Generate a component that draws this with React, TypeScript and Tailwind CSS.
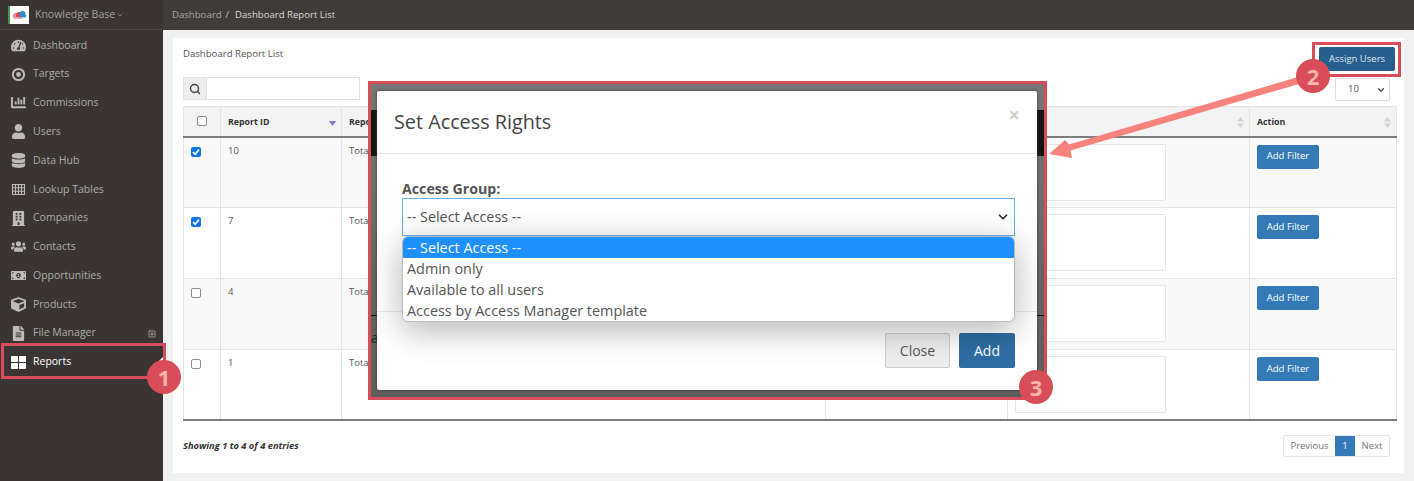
import { ChevronDown, Search } from 'lucide-react';
import {
  FaTachometerAlt,
  FaChartBar,
  FaUser,
  FaDatabase,
  FaBuilding,
  FaUsers,
  FaMoneyBillAlt,
  FaCube,
  FaFileAlt,
  FaThLarge,
} from 'react-icons/fa';
import { FiPlusSquare } from 'react-icons/fi';

function TargetIcon({ size, className }: { size?: number; className?: string }) {
  return (
    <svg width={size} height={size} viewBox="0 0 15 15" className={className}>
      <circle cx="7.5" cy="7.5" r="5.6" fill="none" stroke="currentColor" strokeWidth="2" />
      <circle cx="7.5" cy="7.5" r="2.4" fill="currentColor" />
    </svg>
  );
}

function GridIcon({ size, className }: { size?: number; className?: string }) {
  return (
    <svg width={size} height={size} viewBox="0 0 15 15" className={className}>
      <path
        d="M1.5 2.5 H13.5 V12.5 H1.5 Z M1.5 5.8 H13.5 M1.5 9.2 H13.5 M4.5 2.5 V12.5 M7.5 2.5 V12.5 M10.5 2.5 V12.5"
        fill="none"
        stroke="currentColor"
        strokeWidth="1.1"
      />
    </svg>
  );
}

const menu = [
  { label: 'Dashboard', icon: FaTachometerAlt },
  { label: 'Targets', icon: TargetIcon },
  { label: 'Commissions', icon: FaChartBar },
  { label: 'Users', icon: FaUser },
  { label: 'Data Hub', icon: FaDatabase },
  { label: 'Lookup Tables', icon: GridIcon },
  { label: 'Companies', icon: FaBuilding },
  { label: 'Contacts', icon: FaUsers },
  { label: 'Opportunities', icon: FaMoneyBillAlt },
  { label: 'Products', icon: FaCube },
  { label: 'File Manager', icon: FaFileAlt },
];

const rows = [
  { id: 10, checked: true },
  { id: 7, checked: true },
  { id: 4, checked: false },
  { id: 1, checked: false },
];

function SortIcon({ className }: { className?: string }) {
  return (
    <svg width="7" height="11" viewBox="0 0 7 11" className={className}>
      <path d="M3.5 0 L7 4.5 H0 Z" fill="#d4d4d4" />
      <path d="M3.5 11 L7 6.5 H0 Z" fill="#d4d4d4" />
    </svg>
  );
}

function Checkbox({ checked }: { checked: boolean }) {
  if (checked) {
    return (
      <span className="flex h-[10px] w-[10px] items-center justify-center rounded-[2px] bg-[#0f75f0]">
        <svg width="8" height="8" viewBox="0 0 8 8">
          <path d="M1 4.2 L3.2 6.3 L7 1.6" fill="none" stroke="#fff" strokeWidth="1.6" />
        </svg>
      </span>
    );
  }
  return <span className="block h-[10px] w-[10px] rounded-[2px] border border-[#8c8c8c] bg-white" />;
}

function Badge({ n, className }: { n: number; className: string }) {
  return (
    <div
      className={`absolute flex h-[34px] w-[34px] items-center justify-center rounded-full bg-[#d94c59] text-[22px] font-bold text-[#f9b4ac] ${className}`}
    >
      {n}
    </div>
  );
}

export default function App() {
  return (
    <div className="relative flex h-[481px] w-[1414px] overflow-hidden bg-[#f1f1f1] font-['Open_Sans',sans-serif] text-[#555]">
      {/* Sidebar */}
      <aside className="flex w-[163px] shrink-0 flex-col bg-[#3a3532] text-[10.5px] text-[#aeaba8]">
        <div className="flex h-[30px] items-center border-b border-[#4a4643] pl-[8px]">
          <div className="flex h-[18px] w-[21px] items-center justify-center border-l-[2px] border-[#3d9a3d] bg-white">
            <svg width="15" height="10" viewBox="0 0 15 10">
              <circle cx="4" cy="6" r="3" fill="#f08a90" />
              <circle cx="7" cy="5" r="3" fill="#e0455a" />
              <circle cx="10.5" cy="4" r="3" fill="#2a8fd0" />
              <rect x="2" y="7" width="8" height="2" fill="#f4a6aa" />
              <rect x="8" y="5" width="6" height="2.4" fill="#2a8fd0" />
            </svg>
          </div>
          <span className="ml-[6px] text-[10.5px] text-[#a3a09d]">Knowledge Base</span>
          <ChevronDown size={8} className="ml-[1px]" />
        </div>
        <nav className="flex flex-col pt-[1px]">
          {menu.map((item) => (
            <div key={item.label} className="relative flex h-[28.8px] items-center pl-[11px]">
              <item.icon size={15} className="w-[15px] text-[#bdbab7]" />
              <span className="ml-[7px]">{item.label}</span>
              {item.label === 'File Manager' && (
                <FiPlusSquare size={8} className="absolute right-[7px] top-[11px] text-[#c8c6c4]" />
              )}
            </div>
          ))}
          <div className="relative flex h-[28.8px] items-center pl-[11px] text-white">
            <FaThLarge size={15} className="w-[15px]" />
            <span className="ml-[7px]">Reports</span>
            <span className="absolute right-0 top-[9px] h-0 w-0 border-y-[5px] border-r-[5px] border-y-transparent border-r-white" />
          </div>
        </nav>
      </aside>

      {/* Main */}
      <div className="flex min-w-0 flex-1 flex-col">
        <header className="flex h-[30px] items-center bg-[#403c39] pl-[9px] text-[9.6px]">
          <span className="text-[#a9a6a3]">Dashboard</span>
          <span className="ml-[4px] text-[#c4c1be]">/</span>
          <span className="ml-[6px] text-[#d8d8d8]">Dashboard Report List</span>
        </header>

        <main className="px-[10px] pt-[8px]">
          <section className="h-[435px] w-[1231px] bg-white pl-[10px] pt-[9px]">
            <div className="flex h-[30px] items-start justify-between pr-[9px]">
              <h2 className="text-[9.6px] text-[#555]">Dashboard Report List</h2>
              <button className="h-[24px] w-[76px] rounded-[2px] bg-[#285e8e] text-[9.5px] text-[#dfe8ef]">
                Assign Users
              </button>
            </div>

            <div className="flex h-[29px] justify-between pr-[14px]">
              <div className="flex h-[23px] w-[177px] border border-[#e2e2e2]">
                <span className="flex w-[23px] items-center justify-center border-r border-[#e2e2e2] bg-[#eee]">
                  <Search size={12} strokeWidth={3} className="text-[#444]" />
                </span>
              </div>
              <div className="mt-[1px] flex h-[23px] w-[55px] items-center justify-between rounded-[1px] border border-[#ddd] pl-[12px] pr-[3px] text-[9.5px]">
                10
                <ChevronDown size={10} strokeWidth={3} className="text-[#444]" />
              </div>
            </div>

            <table className="w-[1213px] table-fixed border-collapse border-b-2 border-[#7d7d7d] text-[9.5px]">
              <colgroup>
                <col className="w-[37px]" />
                <col className="w-[121px]" />
                <col className="w-[484px]" />
                <col className="w-[182px]" />
                <col className="w-[242px]" />
                <col className="w-[147px]" />
              </colgroup>
              <thead>
                <tr className="h-[30px] border-b-2 border-[#7d7d7d] bg-[#f3f3f3] text-left text-[8.8px] text-[#333]">
                  <th className="border border-b-0 border-[#e4e4e4]">
                    <span className="ml-[13px] block h-[10px] w-[10px] rounded-[2px] border border-[#8c8c8c] bg-white" />
                  </th>
                  <th className="relative border border-b-0 border-[#e4e4e4] pl-[7px] pt-[2px] font-bold">
                    Report ID
                    <svg width="7" height="5" viewBox="0 0 7 5" className="absolute right-[5px] top-[14px]">
                      <path d="M0 0 H7 L3.5 5 Z" fill="#7b7bd6" />
                    </svg>
                  </th>
                  <th className="border border-b-0 border-[#e4e4e4] pl-[7px] pt-[2px] font-bold">Report</th>
                  <th className="border border-b-0 border-[#e4e4e4]" />
                  <th className="relative border border-b-0 border-[#e4e4e4]">
                    <SortIcon className="absolute right-[5px] top-[10px]" />
                  </th>
                  <th className="relative border border-b-0 border-[#e4e4e4] pl-[7px] pt-[2px] font-bold">
                    Action
                    <SortIcon className="absolute right-[5px] top-[10px]" />
                  </th>
                </tr>
              </thead>
              <tbody>
                {rows.map((row, i) => (
                  <tr
                    key={row.id}
                    className={`h-[70.9px] border-b border-[#e4e4e4] align-top ${i % 2 === 0 ? 'bg-[#f9f9f9]' : 'bg-white'}`}
                  >
                    <td className="border-x border-[#e4e4e4] pl-[7px] pt-[9px]">
                      <Checkbox checked={row.checked} />
                    </td>
                    <td className="border-x border-[#e4e4e4] pl-[7px] pt-[6px]">{row.id}</td>
                    <td className="border-x border-[#e4e4e4] pl-[7px] pt-[6px]">Total</td>
                    <td className="border-x border-[#e4e4e4]" />
                    <td className="border-x border-[#e4e4e4] pl-[7px] pt-[6px]">
                      <div className="h-[57px] w-[151px] rounded-[1px] border border-[#e6e6e6] bg-white" />
                    </td>
                    <td className="border-x border-[#e4e4e4] pl-[7px] pt-[7px]">
                      <button className="h-[24px] w-[62px] rounded-[2px] bg-[#337ab7] text-[9.5px] text-white">
                        Add Filter
                      </button>
                    </td>
                  </tr>
                ))}
              </tbody>
            </table>

            <div className="flex items-center justify-between pr-[14px] pt-[14px]">
              <span className="-mt-[1px] text-[9.3px] font-bold italic text-[#333]">Showing 1 to 4 of 4 entries</span>
              <div className="flex h-[22px] items-stretch rounded-[2px] border border-[#e6e6e6] text-[9.5px]">
                <span className="flex w-[51px] items-center justify-center text-[#777]">Previous</span>
                <span className="flex w-[20px] items-center justify-center bg-[#337ab7] text-white">1</span>
                <span className="flex w-[34px] items-center justify-center text-[#777]">Next</span>
              </div>
            </div>
          </section>
        </main>
      </div>

      {/* Callout 1 */}
      <div className="absolute left-[1px] top-[343px] h-[36px] w-[165px] border-[3px] border-[#d94c59]" />
      <Badge n={1} className="left-[147px] top-[360px]" />

      {/* Callout 2 */}
      <div className="absolute left-[1312px] top-[42px] h-[35px] w-[89px] border-[3px] border-[#d94c59]" />

      {/* Modal callout 3 */}
      <div className="absolute left-[368px] top-[81px] h-[319px] w-[679px] border-[3px] border-[#d94c59] bg-gradient-to-b from-[#777] to-[#5e5e5e] pl-[6px] pt-[7px]">
        <div className="absolute inset-x-0 top-[26px] h-[46px] bg-[#141414]" />
        <div className="absolute inset-x-0 top-[231px] h-[1px] bg-[#111]" />
        <span className="absolute left-[0px] top-[245px] text-[14px] leading-[18px] text-[#222]">a</span>
        <div className="relative h-[299px] w-[660px] rounded-[2px] bg-white shadow-[0_0_3px_#333]">
          <div className="relative flex h-[63px] items-center border-b border-[#e8e8e8] pl-[17px]">
            <h3 className="-mt-[1px] text-[19.8px] text-[#444]">Set Access Rights</h3>
            <span className="absolute right-[17px] top-[12px] text-[20px] font-bold leading-[24px] text-[#cfcfcf]">×</span>
          </div>
          <div className="h-[157px] pl-[25px] pt-[25px]">
            <label className="block text-[14.2px] font-bold leading-[19px] text-[#555]">Access Group:</label>
            <div className="flex h-[38px] w-[613px] items-center justify-between border border-[#66afe9] pl-[4px] pr-[4px] text-[14.4px] text-[#555]">
              -- Select Access --
              <ChevronDown size={14} strokeWidth={3} className="text-[#333]" />
            </div>
          </div>
          <div className="flex h-[79px] justify-end gap-[9px] border-t border-[#e8e8e8] pr-[22px] pt-[21px]">
            <button className="h-[35px] w-[65px] rounded-[2px] border border-[#ccc] bg-[#eee] text-[14px] text-[#555]">
              Close
            </button>
            <button className="h-[35px] w-[56px] rounded-[2px] bg-[#2e6da4] text-[14px] text-white">
              Add
            </button>
          </div>

          {/* Open dropdown list */}
          <ul className="absolute left-[25px] top-[145px] w-[613px] overflow-hidden rounded-[6px] border border-[#bbb] bg-white text-[14.4px] leading-[21px] text-[#555] shadow-[0_8px_34px_rgba(0,0,0,0.3)]">
            <li className="bg-[#1e90ff] pl-[4px] text-white">-- Select Access --</li>
            <li className="pl-[4px]">Admin only</li>
            <li className="pl-[4px]">Available to all users</li>
            <li className="pl-[4px]">Access by Access Manager template</li>
          </ul>
        </div>
      </div>
      <Badge n={3} className="left-[1019px] top-[370px]" />

      {/* Arrow from Assign Users to the modal */}
      <svg className="absolute inset-0" width="1414" height="481" viewBox="0 0 1414 481">
        <path d="M1298 77 L1069 144.5 L1065 140 L1049 154 L1072 158 L1070.5 150.5 L1299 84 Z" fill="#f8837e" />
      </svg>
      <Badge n={2} className="left-[1296px] top-[59px]" />
    </div>
  );
}
